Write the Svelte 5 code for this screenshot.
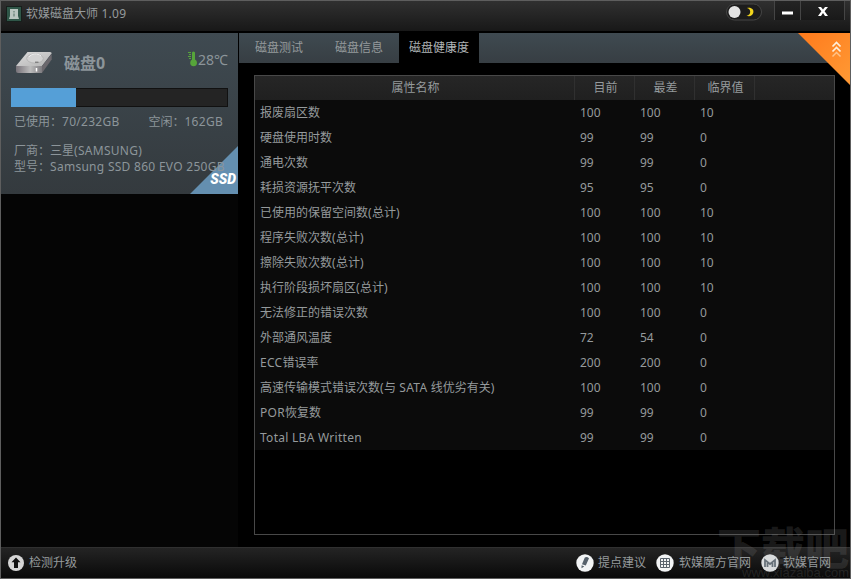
<script lang="ts">
  type Attribute = { name: string; current: number; worst: number; threshold: number };

  const tabs = ["磁盘测试", "磁盘信息", "磁盘健康度"];
  let activeTab = $state(2);

  const disk = { used: 70, total: 232, free: 162 };

  const attributes: Attribute[] = [
    { name: "报废扇区数", current: 100, worst: 100, threshold: 10 },
    { name: "硬盘使用时数", current: 99, worst: 99, threshold: 0 },
    { name: "通电次数", current: 99, worst: 99, threshold: 0 },
    { name: "耗损资源抚平次数", current: 95, worst: 95, threshold: 0 },
    { name: "已使用的保留空间数(总计)", current: 100, worst: 100, threshold: 10 },
    { name: "程序失败次数(总计)", current: 100, worst: 100, threshold: 10 },
    { name: "擦除失败次数(总计)", current: 100, worst: 100, threshold: 10 },
    { name: "执行阶段损坏扇区(总计)", current: 100, worst: 100, threshold: 10 },
    { name: "无法修正的错误次数", current: 100, worst: 100, threshold: 0 },
    { name: "外部通风温度", current: 72, worst: 54, threshold: 0 },
    { name: "ECC错误率", current: 200, worst: 200, threshold: 0 },
    { name: "高速传输模式错误次数(与 SATA 线优劣有关)", current: 100, worst: 100, threshold: 0 },
    { name: "POR恢复数", current: 99, worst: 99, threshold: 0 },
    { name: "Total LBA Written", current: 99, worst: 99, threshold: 0 },
  ];

  // split into latin and chinese runs, latin gets a bit more tracking
  const runs = (text: string) => text.split(/([ -~]+)/).filter(Boolean);
  const isLatin = (run: string) => /^[ -~]/.test(run);
</script>

{#snippet mixed(text: string)}
  {#each runs(text) as run}{#if isLatin(run)}<i>{run}</i>{:else}{run}{/if}{/each}
{/snippet}

<div class="window">
  <header>
    <svg class="app-icon" width="16" height="16" viewBox="0 0 16 16">
      <rect x=".5" y=".5" width="15" height="15" fill="#2f5648" stroke="#171f1c" />
      <path d="M4 3h8v7l1 3H3l1-3z" fill="#b9c6c0" />
      <path d="M7.300 5h1.400v1.500H7.300zM7.300 7.500h1.400v3H7.300z" fill="#6d877c" />
    </svg>
    <h1>{@render mixed("软媒磁盘大师 1.09")}</h1>
    <button class="theme" aria-label="theme">
      <svg width="36" height="18" viewBox="0 0 36 18">
        <rect x=".5" y="1" width="35" height="16" rx="8" fill="#1c1c1c" stroke="#454545" />
        <circle cx="8.500" cy="9" r="6" fill="#e3e3e3" />
        <path d="M21 5C26 4.200 28 7 27.300 9.800 26.500 12.800 23.500 14 20.500 12.800 23.200 12.200 24.300 10.500 24.200 8.500 24 6.800 23 5.700 21 5z" fill="#f1d51c" />
      </svg>
    </button>
    <button class="control" aria-label="minimize">
      <svg width="12" height="4"><rect x="0" y=".5" width="11" height="3" fill="#fff" /></svg>
    </button>
    <button class="control close" aria-label="close">
      <svg width="10" height="9" viewBox="0 0 10 9">
        <path d="M0 0h3l2 2.600L7 0h3L6.600 4.300 10 9H7L5 6 3 9H0l3.400-4.700z" fill="#fff" />
      </svg>
    </button>
  </header>

  <div class="body">
    <aside>
      <section class="disk">
        <div class="disk-head">
          <svg class="drive" width="38" height="24" viewBox="0 0 38 24">
            <defs>
              <linearGradient id="top" x1="0" y1="0" x2="1" y2="1">
                <stop offset="0" stop-color="#dcdcdc" />
                <stop offset="1" stop-color="#b4b4b4" />
              </linearGradient>
              <linearGradient id="front" x1="0" y1="0" x2="1" y2="0">
                <stop offset="0" stop-color="#777279" />
                <stop offset=".55" stop-color="#bcbcbc" />
                <stop offset="1" stop-color="#7e7c80" />
              </linearGradient>
            </defs>
            <path d="M12.500 1H35q2 0 1.500 1.500L27 15H1z" fill="url(#top)" />
            <path d="M1 15h26v7H3q-2 0-2-2z" fill="url(#front)" />
            <path d="M27 15l9.700-12v5.500L27 22z" fill="#6b686d" />
            <ellipse cx="20" cy="7.500" rx="8.300" ry="4.600" fill="#d2d2d2" stroke="#b0b0b0" stroke-width=".8" />
            <path d="M14 6c2-3.500 9-4 12-1" fill="none" stroke="#eee" />
            <path d="M20 11.200h3.500" stroke="#666" />
            <path d="M21.500 17v3.500" stroke="#fff" stroke-width="1.500" />
          </svg>
          <h2>磁盘0</h2>
          <div class="temperature">
            <svg width="10" height="16" viewBox="0 0 10 16">
              <path d="M4 1.500q1.500-2 3 0v7q2 1 2 3.300a3.400 3.400 0 0 1-6.800 0Q2.200 9.500 4 8.500z" fill="#56a53a" />
              <path d="M0 1.500h3M1 3.500h2M0 5.500h3M1 7.500h2" stroke="#56a53a" />
            </svg>
            <span>28℃</span>
          </div>
        </div>
        <div class="usage">
          <div class="usage-fill" style:width="{(disk.used / disk.total) * 100}%"></div>
        </div>
        <div class="space">
          <span>{@render mixed(`已使用：${disk.used}/${disk.total}GB`)}</span>
          <span>{@render mixed(`空闲：${disk.free}GB`)}</span>
        </div>
        <p>{@render mixed("厂商：三星(SAMSUNG)")}</p>
        <div class="ssd"><span>SSD</span></div>
        <p class="model">{@render mixed("型号：Samsung SSD 860 EVO 250GB")}</p>
      </section>
    </aside>

    <main>
      <nav>
        {#each tabs as tab, i}
          <button class:active={i === activeTab} onclick={() => (activeTab = i)}>{tab}</button>
        {/each}
      </nav>
      <div class="table">
        <div class="row head">
          <span>属性名称</span>
          <span>目前</span>
          <span>最差</span>
          <span>临界值</span>
          <span></span>
        </div>
        {#each attributes as item}
          <div class="row">
            <span>{@render mixed(item.name)}</span>
            <span>{item.current}</span>
            <span>{item.worst}</span>
            <span>{item.threshold}</span>
          </div>
        {/each}
      </div>
    </main>
    <div class="corner">
      <svg width="52" height="52" viewBox="0 0 52 52">
        <defs>
          <linearGradient id="orange" x1="0" y1="0" x2="1" y2="1">
            <stop offset="0" stop-color="#ff7a1c" />
            <stop offset="1" stop-color="#ff9a35" />
          </linearGradient>
        </defs>
        <path d="M0 0h52v52z" fill="url(#orange)" />
        <path d="M34.500 13.500l4-4 4 4M34.500 18.500l4-4 4 4" fill="none" stroke="#fff0dc" stroke-width="1.700" />
        <path d="M34.500 23.500l4-4 4 4" fill="none" stroke="#ffc287" stroke-width="1.500" />
      </svg>
    </div>
  </div>

  <div class="watermark">
    <strong>下载吧</strong>
    <span>www.xiazaiba.com</span>
  </div>

  <footer>
    <a class="upgrade" href="#upgrade">
      <svg width="16" height="16" viewBox="0 0 16 16">
        <circle cx="8" cy="8" r="8" fill="#d6d6d6" />
        <path d="M8 2.500l4.500 4.700H10V13H6V7.200H3.500z" fill="#111" />
      </svg>
      检测升级
    </a>
    <a class="suggest" href="#suggest">
      <svg width="18" height="18" viewBox="0 0 18 18">
        <circle cx="9" cy="9" r="8.700" fill="#f2f4f5" />
        <path d="M8.800 3.600q2-1.200 4.200.6L9.800 11.500 6 10.200zM5.600 11.200l2.700 1.300-2.800 1.700z" fill="#56616b" />
      </svg>
      提点建议
    </a>
    <a class="cube" href="#cube">
      <svg width="18" height="18" viewBox="0 0 18 18">
        <circle cx="9" cy="9" r="8.700" fill="#f2f4f5" />
        <path d="M4.500 4.500h9v9h-9zM7.500 4.500v9M10.500 4.500v9M4.500 7.500h9M4.500 10.500h9" fill="none" stroke="#59636c" />
      </svg>
      软媒魔方官网
    </a>
    <a class="site" href="#site">
      <svg width="18" height="18" viewBox="0 0 18 18">
        <circle cx="9" cy="9" r="8.700" fill="#d9dcdd" />
        <path d="M4 13V6l5 4 5-4v7M6.500 13V9M11.500 13V9" fill="none" stroke="#68727a" stroke-width="1.800" />
      </svg>
      软媒官网
    </a>
  </footer>
</div>

<style>
  :global(body) {
    background: #000;
  }
  .window {
    position: relative;
    box-sizing: border-box;
    width: 851px;
    height: 579px;
    border: 1px solid #5e5e5e;
    background: #000;
    color: #959a9c;
    font: 12px/16px "Noto Sans", "Noto Sans CJK SC", sans-serif;
    display: flex;
    flex-direction: column;
    overflow: hidden;
  }
  h1, h2, p {
    margin: 0;
    font-weight: normal;
  }
  i {
    font-style: normal;
    letter-spacing: .28px;
    white-space: pre;
  }
  button {
    border: 0;
    padding: 0;
    background: none;
    color: inherit;
    font: inherit;
  }
  svg {
    display: block;
    flex: none;
  }
  header {
    box-sizing: border-box;
    height: 32px;
    flex: none;
    display: flex;
    align-items: flex-start;
    padding-left: 5px;
    background: linear-gradient(#303030, #181818);
    border-bottom: 2px solid #000;
  }
  .app-icon {
    margin-top: 5px;
  }
  h1 {
    flex: 1;
    margin: 5px 0 0 4px;
    font-size: 12px;
    line-height: 16px;
  }
  .theme {
    margin: 2px 12px 0 0;
  }
  .control {
    box-sizing: border-box;
    width: 26px;
    height: 19px;
    display: flex;
    justify-content: center;
    padding-top: 10px;
    border-left: 1px solid #454545;
    background: linear-gradient(#242424, #191919);
  }
  .close {
    width: 45px;
    margin-right: 5px;
    padding-top: 6px;
    border-right: 1px solid #454545;
  }
  .body {
    position: relative;
    height: 514px;
    flex: none;
    display: flex;
  }
  aside {
    width: 237px;
    background: #050505;
  }
  .disk {
    position: relative;
    box-sizing: border-box;
    height: 161px;
    padding: 0 10px;
    background: linear-gradient(#3f4a51, #343a3e);
    color: #8c959a;
  }
  .disk-head {
    display: flex;
    height: 55px;
  }
  .drive {
    margin: 18px 0 0 4px;
  }
  h2 {
    flex: 1;
    margin: 18px 0 0 11px;
    font-size: 16px;
    font-weight: bold;
    line-height: 24px;
  }
  .temperature {
    display: flex;
    gap: 0;
    margin-top: 18px;
  }
  .temperature span {
    font-size: 14px;
    line-height: 18px;
  }
  .usage {
    box-sizing: border-box;
    height: 19px;
    border: 1px solid #111;
    border-left: 0;
    background: #242424;
  }
  .usage-fill {
    height: 19px;
    margin-top: -1px;
    background: #559fd7;
  }
  .space {
    display: flex;
    justify-content: space-between;
    margin: 7px 5px 13px 3px;
  }
  p {
    margin-left: 3px;
    white-space: nowrap;
  }
  .model {
    position: relative;
  }
  .ssd {
    position: absolute;
    right: 0;
    bottom: 0;
    width: 48px;
    height: 48px;
    background: #648fb0;
    clip-path: polygon(100% 0, 100% 100%, 0 100%);
  }
  .ssd span {
    position: absolute;
    right: 2px;
    bottom: 7px;
    color: #fff;
    font: italic 900 14px/15px Roboto, sans-serif;
  }
  main {
    width: 611px;
    margin-left: 1px;
  }
  nav {
    display: flex;
    height: 30px;
    background: linear-gradient(#3f4a51, #373e43);
  }
  nav button {
    width: 80px;
  }
  nav .active {
    background: #000;
    color: #afb3b5;
  }
  .table {
    box-sizing: border-box;
    width: 581px;
    height: 460px;
    margin: 12px 0 0 15px;
    border: 1px solid #484848;
  }
  .row {
    display: grid;
    grid-template-columns: 320px 60px 60px 60px 1fr;
    height: 25px;
    line-height: 26px;
    background: #0b0b0b;
  }
  .row span {
    padding-left: 5px;
    white-space: nowrap;
  }
  .head {
    height: 24px;
    line-height: 24px;
    background: linear-gradient(#262626, #202020);
    text-align: center;
  }
  .head span {
    padding: 0 0 0 2px;
    border-right: 1px solid #303030;
  }
  .head span:last-child {
    border: 0;
  }
  .corner {
    position: absolute;
    top: 0;
    right: 0;
  }
  footer {
    flex: 1;
    display: flex;
    align-items: center;
    padding: 0 19px 0 7px;
    border-top: 1px solid #303030;
    background: linear-gradient(#242424, #090909);
  }
  a {
    position: relative;
    z-index: 2;
    display: flex;
    align-items: center;
    gap: 4px;
    color: inherit;
    text-decoration: none;
  }
  .upgrade {
    gap: 5px;
    margin-right: auto;
  }
  .cube, .site {
    margin-left: 10px;
  }
  .cube {
    gap: 5px;
  }
  .watermark {
    position: absolute;
    z-index: 1;
    right: 1px;
    bottom: 0;
    display: flex;
    flex-direction: column;
    align-items: flex-end;
    color: rgba(160, 160, 160, .17);
    pointer-events: none;
  }
  .watermark strong {
    font: 900 44px/42px "Noto Sans CJK SC", sans-serif;
  }
  .watermark span {
    font: 13px/11px "Liberation Sans", sans-serif;
  }
</style>
